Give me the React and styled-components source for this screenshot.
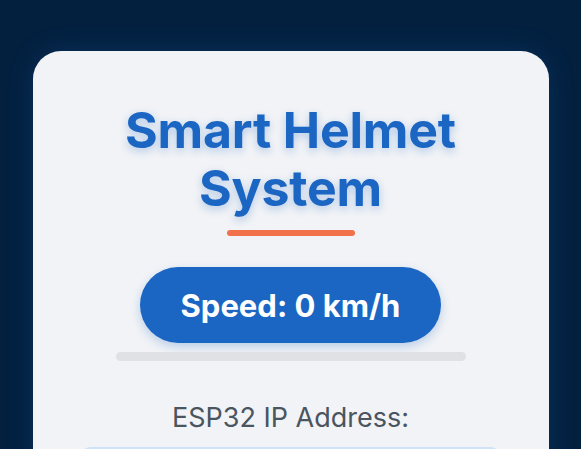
import React from 'react';
import styled, { createGlobalStyle } from 'styled-components';

const GlobalStyle = createGlobalStyle`
  html, body {
    margin: 0;
    padding: 0;
    background: #03203f;
    overflow: hidden;
  }
  body {
    font-family: Inter, Roboto, 'Noto Sans', sans-serif;
  }
`;

const Page = styled.main`
  display: flex;
  justify-content: center;
  padding-top: 51px;
  min-height: 100vh;
  box-sizing: border-box;
`;

const Card = styled.section`
  width: 516px;
  box-sizing: border-box;
  background: #f1f3f6;
  border-radius: 28px 28px 0 0;
  padding: 50px 0 40px;
  display: flex;
  flex-direction: column;
  align-items: center;
  box-shadow: 0 0 28px rgba(40, 110, 200, 0.2);
`;

const Title = styled.h1`
  margin: 0;
  font-size: 50px;
  line-height: 58px;
  font-weight: 700;
  text-align: center;
  color: #1b65c3;
  letter-spacing: -0.2px;
  text-shadow: 0 3px 8px rgba(27, 101, 195, 0.3);
`;

const Accent = styled.div`
  width: 128px;
  height: 6px;
  margin-top: 13px;
  border-radius: 3px;
  background: #f0714a;
`;

const SpeedPill = styled.div`
  margin-top: 31px;
  width: 301px;
  height: 76px;
  border-radius: 38px;
  background: #1b65c3;
  color: #fff;
  display: flex;
  align-items: center;
  justify-content: center;
  font-size: 31px;
  font-weight: 700;
  box-shadow: 0 4px 10px rgba(27, 101, 195, 0.25);
`;

const Track = styled.div`
  margin-top: 9px;
  width: 350px;
  height: 9px;
  border-radius: 5px;
  background: #dfe1e4;
`;

const Label = styled.p`
  margin: 41px 0 0;
  font-size: 27px;
  line-height: 32px;
  color: #4a5560;
`;

const IpBox = styled.div`
  margin-top: 13px;
  width: 423px;
  height: 52px;
  box-sizing: border-box;
  border: 2px solid #cfe2f7;
  border-radius: 12px;
  background: #f4f8fd;
`;

export default function App() {
  return (
    <>
      <GlobalStyle />
      <Page>
        <Card>
          <Title>
            Smart Helmet
            <br />
            System
          </Title>
          <Accent />
          <SpeedPill>Speed: 0 km/h</SpeedPill>
          <Track />
          <Label>ESP32 IP Address:</Label>
          <IpBox />
        </Card>
      </Page>
    </>
  );
}
